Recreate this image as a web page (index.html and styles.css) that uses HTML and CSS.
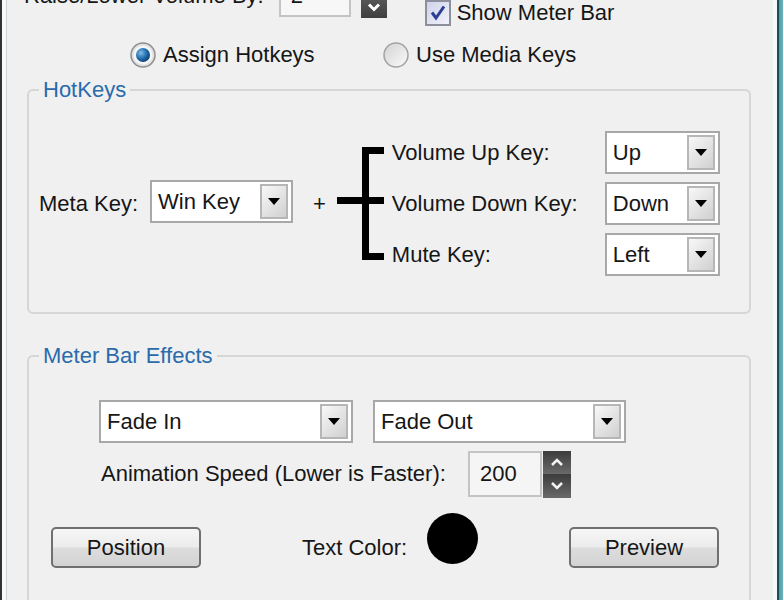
FILE: index.html
```html
<!DOCTYPE html>
<html lang="en">
<head>
    <meta charset="UTF-8">
    <meta name="viewport" content="width=device-width, initial-scale=1.0">
    <title>Volume Settings</title>
    <link rel="stylesheet" href="styles.css">
</head>
<body>
    <div class="screen">
        <div class="window">
            <div class="top-row">
                <div class="volume">
                    <span class="vol-label">Raise/Lower Volume By:</span>
                    <div class="vol-input">2</div>
                    <div class="dark-btn">
                        <svg width="14" height="9" viewBox="0 0 14 9"><path d="M2 1.5 L7 6.5 L12 1.5" fill="none" stroke="#fff" stroke-width="3"/></svg>
                    </div>
                </div>
                <div class="check">
                    <svg class="check-box" width="26" height="26" viewBox="0 0 26 26">
                        <defs>
                            <linearGradient id="cb" x1="0" y1="0" x2="1" y2="1">
                                <stop offset="0" stop-color="#cdd1ea"/>
                                <stop offset="1" stop-color="#f3f4fb"/>
                            </linearGradient>
                        </defs>
                        <rect x="1" y="1" width="24" height="24" fill="url(#cb)" stroke="#8d8f9a" stroke-width="2"/>
                        <path d="M7 12.5 L11 18 L19 6.5" fill="none" stroke="#2c3d94" stroke-width="3"/>
                    </svg>
                    <span>Show Meter Bar</span>
                </div>
            </div>

            <div class="mode-row">
                <div class="radio first">
                    <svg width="26" height="26" viewBox="0 0 26 26">
                        <defs>
                            <radialGradient id="dot" cx="0.35" cy="0.35" r="0.7">
                                <stop offset="0" stop-color="#86bde8"/>
                                <stop offset="0.5" stop-color="#2a78b8"/>
                                <stop offset="1" stop-color="#0c3f6e"/>
                            </radialGradient>
                        </defs>
                        <circle cx="13" cy="13" r="12" fill="#e0e0e0" stroke="#8e8e8e" stroke-width="1.5"/>
                        <circle cx="13" cy="13" r="9.5" fill="#f6f6f6"/>
                        <circle cx="13" cy="13" r="7" fill="url(#dot)"/>
                    </svg>
                    <span>Assign Hotkeys</span>
                </div>
                <div class="radio">
                    <svg width="26" height="26" viewBox="0 0 26 26">
                        <defs>
                            <linearGradient id="off" x1="0" y1="0" x2="1" y2="1">
                                <stop offset="0" stop-color="#d2d2d2"/>
                                <stop offset="1" stop-color="#fbfbfb"/>
                            </linearGradient>
                        </defs>
                        <circle cx="13" cy="13" r="12" fill="url(#off)" stroke="#a2a2a2" stroke-width="1.5"/>
                    </svg>
                    <span>Use Media Keys</span>
                </div>
            </div>

            <fieldset class="group hotkeys">
                <legend>HotKeys</legend>
                <div class="hotkey-row">
                    <span class="meta-label">Meta Key:</span>
                    <div class="select meta-select">
                        <span>Win Key</span>
                        <span class="select-btn"><span class="arrow"></span></span>
                    </div>
                    <span class="plus">+</span>
                    <svg class="bracket" width="47" height="145" viewBox="0 0 47 145">
                        <rect x="25" y="16" width="7" height="113" fill="#000"/>
                        <rect x="25" y="16" width="22" height="7" fill="#000"/>
                        <rect x="0" y="66" width="47" height="7" fill="#000"/>
                        <rect x="25" y="122" width="22" height="7" fill="#000"/>
                    </svg>
                    <div class="key-grid">
                        <span>Volume Up Key:</span>
                        <div class="select">
                            <span>Up</span>
                            <span class="select-btn"><span class="arrow"></span></span>
                        </div>
                        <span>Volume Down Key:</span>
                        <div class="select">
                            <span>Down</span>
                            <span class="select-btn"><span class="arrow"></span></span>
                        </div>
                        <span>Mute Key:</span>
                        <div class="select">
                            <span>Left</span>
                            <span class="select-btn"><span class="arrow"></span></span>
                        </div>
                    </div>
                </div>
            </fieldset>

            <fieldset class="group effects">
                <legend>Meter Bar Effects</legend>
                <div class="fade-row">
                    <div class="select fade-in">
                        <span>Fade In</span>
                        <span class="select-btn"><span class="arrow"></span></span>
                    </div>
                    <div class="select fade-out">
                        <span>Fade Out</span>
                        <span class="select-btn"><span class="arrow"></span></span>
                    </div>
                </div>
                <div class="speed-row">
                    <span class="speed-label">Animation Speed (Lower is Faster):</span>
                    <div class="speed-input">200</div>
                    <div class="spinner">
                        <div class="spin">
                            <svg width="14" height="9" viewBox="0 0 14 9"><path d="M2 7 L7 2 L12 7" fill="none" stroke="#f2f2f2" stroke-width="2.5"/></svg>
                        </div>
                        <div class="spin">
                            <svg width="14" height="9" viewBox="0 0 14 9"><path d="M2 2 L7 7 L12 2" fill="none" stroke="#f2f2f2" stroke-width="2.5"/></svg>
                        </div>
                    </div>
                </div>
                <div class="button-row">
                    <button class="btn">Position</button>
                    <span class="color-label">Text Color:</span>
                    <div class="swatch"></div>
                    <button class="btn preview">Preview</button>
                </div>
            </fieldset>
        </div>
        <div class="edge"></div>
    </div>
</body>
</html>
```

FILE: styles.css
```css
body {
    margin: 0;
    font-family: 'Liberation Sans', Arial, sans-serif;
    font-size: 22px;
    color: #161616;
    background: #f0f0f0;
    overflow: hidden;
}
.screen {
    display: flex;
    height: 600px;
    overflow: hidden;
}
.window {
    box-sizing: border-box;
    width: 777px;
    height: 660px;
    margin-top: -20px;
    background: #f0f0f0;
    border-left: 2px solid #333;
    border-right: 4px solid #f6fafb;
    box-shadow: inset 4px 0 0 #f7f9fa, inset 5px 0 0 #cfd2d4;
}
.edge {
    width: 6px;
    background: linear-gradient(to right, #1d4d58 0, #1d4d58 2px, #4f9ca7 2px, #6fb3bc 100%);
}

/* top row, cut off by the screenshot */
.top-row {
    display: flex;
    height: 46px;
    padding-left: 22px;
}
.volume {
    display: flex;
    align-items: center;
    height: 44px;
}
.vol-label {
    margin-top: -12px;
}
.vol-input {
    box-sizing: border-box;
    width: 72px;
    height: 30px;
    margin-left: 15px;
    padding-left: 10px;
    line-height: 13px;
    border: 2px solid #c4c4c4;
    background: #f7f7f7;
}
.dark-btn {
    display: flex;
    align-items: center;
    justify-content: center;
    width: 26px;
    height: 22px;
    margin: 10px 0 0 10px;
    background: linear-gradient(#5a5a5a, #404040);
}
.check {
    display: flex;
    align-items: center;
    align-self: flex-end;
    height: 26px;
    margin-left: 38px;
}
.check-box {
    margin-right: 6px;
}

.mode-row {
    display: flex;
    align-items: center;
    height: 30px;
    margin-top: 14px;
    padding-left: 128px;
}
.radio {
    display: flex;
    align-items: center;
    gap: 7px;
}
.radio.first {
    width: 253px;
}

/* group boxes */
.group {
    margin: 8px 22px 0 25px;
    padding: 29px 10px 36px;
    border: 2px solid #d6d6d6;
    border-radius: 6px;
    min-width: 0;
}
.group legend {
    padding: 0 4px;
    line-height: 24px;
    color: #2a6bab;
}

.hotkey-row {
    display: flex;
    align-items: center;
}
.meta-label {
    width: 111px;
}
.meta-select {
    width: 143px;
    margin-bottom: 4px;
}
.plus {
    margin-left: 20px;
}
.bracket {
    margin-left: 11px;
}
.key-grid {
    display: grid;
    grid-template-columns: 213px 115px;
    grid-auto-rows: 43px;
    row-gap: 8px;
    align-items: center;
    margin-left: 8px;
}

.select {
    box-sizing: border-box;
    display: flex;
    align-items: center;
    height: 43px;
    padding: 0 3px 0 6px;
    border: 2px solid #a8a8a8;
    background: #fff;
}
.select-btn {
    box-sizing: border-box;
    display: flex;
    align-items: center;
    justify-content: center;
    width: 28px;
    height: 35px;
    margin-left: auto;
    border: 2px solid #b6b6b6;
    background: linear-gradient(135deg, #f8f8f8, #d0d0d0);
}
.arrow {
    width: 0;
    height: 0;
    border-left: 6px solid transparent;
    border-right: 6px solid transparent;
    border-top: 7px solid #000;
}

.effects {
    margin-top: 30px;
    padding: 32px 10px 40px;
}
.fade-row {
    display: flex;
    gap: 20px;
    margin-left: 60px;
}
.fade-in {
    width: 254px;
}
.fade-out {
    width: 253px;
}
.speed-row {
    display: flex;
    align-items: center;
    height: 48px;
    margin: 7px 0 0 62px;
}
.speed-label {
    width: 367px;
}
.speed-input {
    box-sizing: border-box;
    display: flex;
    align-items: center;
    width: 74px;
    height: 46px;
    padding-left: 10px;
    border: 2px solid #c4c4c4;
    background: #f5f5f5;
}
.spinner {
    display: flex;
    flex-direction: column;
    width: 28px;
    height: 47px;
    margin-left: 1px;
}
.spin {
    flex: 1;
    display: flex;
    align-items: center;
    justify-content: center;
    background: linear-gradient(#3c3c3c, #6a6a6a);
}

.button-row {
    display: flex;
    align-items: center;
    margin: 15px 0 0 12px;
}
.btn {
    box-sizing: border-box;
    width: 150px;
    height: 41px;
    padding: 0;
    border: 2px solid #707070;
    border-radius: 5px;
    background: linear-gradient(#f6f6f6 0%, #ececec 48%, #dddddd 52%, #d3d3d3 100%);
    font: inherit;
    color: #161616;
}
.color-label {
    width: 125px;
    margin-left: 101px;
}
.swatch {
    width: 51px;
    height: 51px;
    margin-bottom: 18px;
    border-radius: 50%;
    background: #000;
}
.preview {
    margin-left: 91px;
}
```
